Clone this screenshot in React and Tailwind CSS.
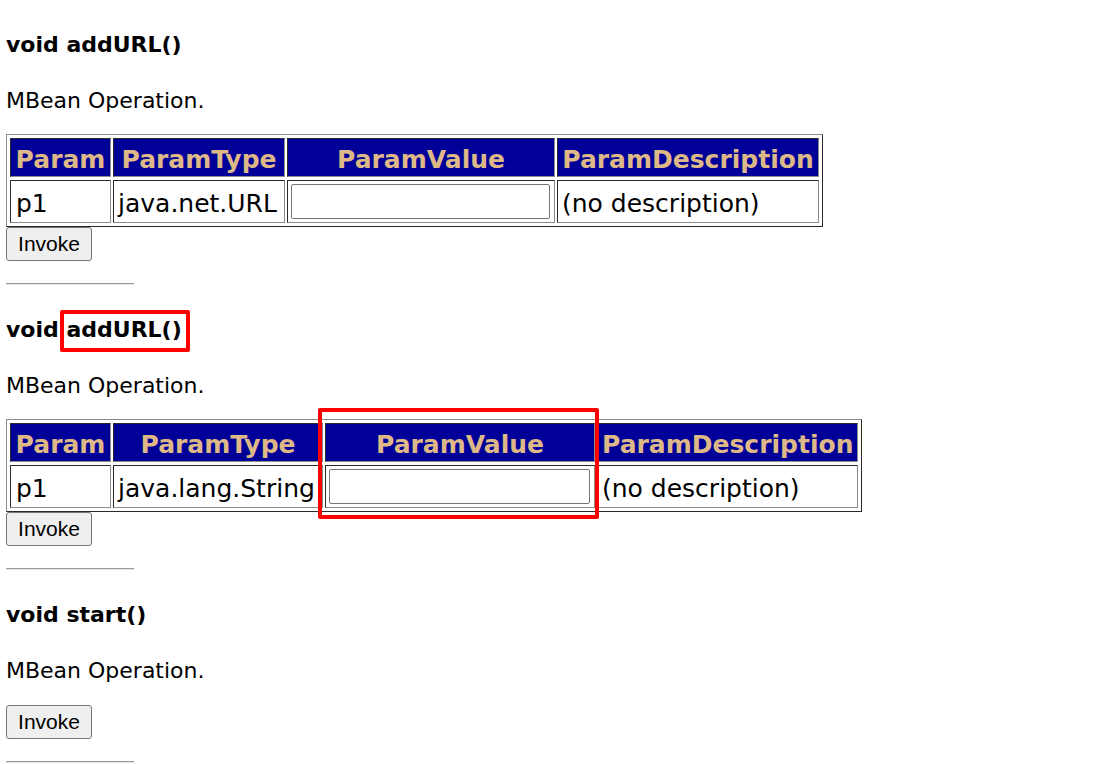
import React from "react";

function Rule({ className }) {
  return (
    <div
      className={
        "w-[128px] h-[2px] border-t border-b border-t-[#9a9a9a] border-b-[#e8e8e8] " +
        className
      }
    />
  );
}

function InvokeButton({ className = "" }) {
  return (
    <button
      type="button"
      className={
        "block h-[34px] w-[86px] rounded-[3px] border border-[#767676] bg-[#efefef] text-[21px] leading-[24px] text-black [font-family:'Liberation_Sans',Arial,sans-serif] " +
        className
      }
    >
      Invoke
    </button>
  );
}

function Th({ children, className = "" }) {
  return (
    <th
      className={
        "h-[39px] px-[4px] pt-[4px] pb-0 text-center align-middle font-bold text-[25px] leading-[29px] whitespace-nowrap bg-[#000099] text-[#deb887] border border-t-[#2a2a2a] border-l-[#2a2a2a] border-r-[#8c8c8c] border-b-[#8c8c8c] " +
        className
      }
    >
      {children}
    </th>
  );
}

function Td({ children, className = "" }) {
  return (
    <td
      className={
        "h-[43px] text-left align-middle font-normal text-[25px] leading-[29px] whitespace-nowrap bg-white text-black border border-t-[#2a2a2a] border-l-[#2a2a2a] border-r-[#8c8c8c] border-b-[#8c8c8c] " +
        className
      }
    >
      {children}
    </td>
  );
}

function ParamTable({ type, wide }) {
  return (
    <table className="border-separate border-spacing-x-[2px] border-spacing-y-[3px] px-[1px] border border-t-[#8c8c8c] border-l-[#8c8c8c] border-r-[#2a2a2a] border-b-[#2a2a2a]">
      <thead>
        <tr>
          <Th className="w-[101px]">Param</Th>
          <Th className={wide ? "w-[210px]" : "w-[172px]"}>ParamType</Th>
          <Th className={wide ? "w-[270px]" : "w-[268px]"}>ParamValue</Th>
          <Th className={wide ? "w-[261px]" : "w-[262px]"}>ParamDescription</Th>
        </tr>
      </thead>
      <tbody>
        <tr>
          <Td className="px-[5px] pt-[4px] pb-0">p1</Td>
          <Td className="px-[4px] pt-[4px] pb-0">{type}</Td>
          <Td className="pl-[3px] pr-[4px] py-0">
            <input
              type="text"
              className="block w-full h-[35px] rounded-[2px] border border-[#767676] bg-white outline-none"
            />
          </Td>
          <Td className="px-[4px] pt-[4px] pb-0">(no description)</Td>
        </tr>
      </tbody>
    </table>
  );
}

export default function App() {
  return (
    <div className="min-h-[764px] bg-white pl-[6px] text-black [font-family:'DejaVu_Sans',Verdana,sans-serif]">
      {/* Operation 1 */}
      <h4 className="pt-[32px] text-[22px] leading-[25px] font-bold">void addURL()</h4>
      <p className="mt-[31px] text-[22px] leading-[25px]">MBean Operation.</p>
      <div className="mt-[21px] w-fit">
        <ParamTable type="java.net.URL" />
      </div>
      <InvokeButton />
      <Rule className="mt-[22px]" />

      {/* Operation 2 */}
      <h4 className="mt-[32px] text-[22px] leading-[25px] font-bold">
        void{" "}
        <span className="relative inline-block">
          addURL()
          <span className="absolute -left-[6px] -right-[8px] -top-[7px] -bottom-[10px] rounded-[2px] border-4 border-[#ff0000]" />
        </span>
      </h4>
      <p className="mt-[31px] text-[22px] leading-[25px]">MBean Operation.</p>
      <div className="relative mt-[21px] w-fit">
        <ParamTable type="java.lang.String" wide />
        <div className="absolute left-[312px] -top-[11px] h-[111px] w-[281px] rounded-[2px] border-4 border-[#ff0000]" />
      </div>
      <InvokeButton />
      <Rule className="mt-[22px]" />

      {/* Operation 3 */}
      <h4 className="mt-[32px] text-[22px] leading-[25px] font-bold">void start()</h4>
      <p className="mt-[31px] text-[22px] leading-[25px]">MBean Operation.</p>
      <InvokeButton className="mt-[22px]" />
      <Rule className="mt-[22px]" />
    </div>
  );
}
